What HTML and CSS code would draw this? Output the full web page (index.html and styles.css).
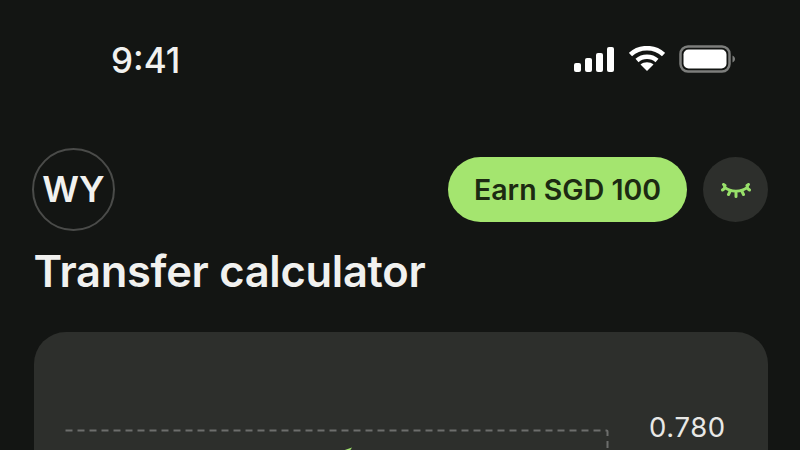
FILE: index.html
```html
<!DOCTYPE html>
<html lang="en">
<head>
<meta charset="utf-8">
<title>Transfer calculator</title>
<link rel="stylesheet" href="styles.css">
</head>
<body>
<main class="screen">
  <header class="status">
    <span class="time">9:41</span>
    <div class="status-icons">
      <svg class="signal" width="40" height="25" viewBox="0 0 40 25"><rect x="0" y="16" width="7" height="9" rx="2"/><rect x="11" y="11" width="7" height="14" rx="2"/><rect x="22" y="6" width="7" height="19" rx="2"/><rect x="33" y="0" width="7" height="25" rx="2"/></svg>
      <svg class="wifi" width="36" height="26" viewBox="0 0 36 26"><path d="M1.500 8.500C10.500 0 25.500 0 34.500 8.500" class="arc"/><path d="M8 14.500C13.500 9.500 22.500 9.500 28 14.500" class="arc"/><path d="M18 25L11.500 18.500C15 15.500 21 15.500 24.500 18.500Z" class="fill"/></svg>
      <svg class="battery" width="56" height="28" viewBox="0 0 56 28"><rect x="1.500" y="1.500" width="49" height="25" rx="7.500" class="shell"/><rect x="4.500" y="4.500" width="43" height="19" rx="5" class="level"/><path d="M53.500 10.500C55.200 11.200 56 12.500 56 14C56 15.500 55.200 16.800 53.500 17.500Z" class="cap"/></svg>
    </div>
  </header>

  <section class="top-row">
    <div class="avatar">WY</div>
    <div class="actions">
      <button class="earn">Earn SGD 100</button>
      <button class="eye" aria-label="Hide balance">
        <svg width="30" height="16" viewBox="0 0 30 16"><path d="M3.500 4C9.500 9.500 20.500 9.500 26.500 4"/><path d="M3.500 5.500L1.500 7M4 2.500L2.500 1.500M9 8.500L7.500 11.500M15 10V13.500M21 8.500L22.500 11.500M26.500 5.500L28.500 7M26 2.500L27.500 1.500"/></svg>
      </button>
    </div>
  </section>

  <h1 class="title">Transfer calculator</h1>

  <section class="card">
    <div class="chart">
      <svg class="plot" width="544" height="23" viewBox="0 0 544 23">
        <path d="M.500 1.500H541.500Q542.500 1.500 542.500 2.500V23" class="grid"/>
        <path d="M277 22L287 18.500L284 23Z" class="mark"/>
      </svg>
      <span class="rate">0.780</span>
    </div>
  </section>
</main>
</body>
</html>
```

FILE: styles.css
```css
* { box-sizing: border-box; }
html, body { margin: 0; height: 100%; }
body { background: #131513; overflow: hidden; font-family: Inter, "Liberation Sans", sans-serif; color: #f1f1ef; }
.screen { width: 800px; height: 450px; overflow: hidden; padding: 0 32px; }
.status { height: 119px; display: flex; justify-content: space-between; align-items: flex-start; padding: 40px 33px 0 79px; }
.time { font-size: 35px; line-height: 40px; font-weight: 500; }
.status-icons { display: flex; align-items: center; gap: 14px; padding-top: 5px; margin-left: -1px; }
.signal { margin-right: 1px; }
.signal rect { fill: #fff; }
.arc { fill: none; stroke: #fff; stroke-width: 4.500; }
.fill { fill: #fff; }
.shell { fill: none; stroke: #7d7e7c; stroke-width: 2.500; }
.level { fill: #fff; }
.cap { fill: #7d7e7c; }
.top-row { display: flex; justify-content: space-between; align-items: center; margin-top: 28px; height: 84px; }
.avatar { width: 83px; height: 83px; border-radius: 50%; border: 2px solid #4a4b49; display: flex; align-items: center; justify-content: center; font-size: 36px; font-weight: 600; }
.actions { display: flex; align-items: center; gap: 16px; }
.earn { width: 239px; height: 65px; border: 0; border-radius: 33px; background: #a4e56f; color: #1c2a12; font: 600 28.500px Inter, "Liberation Sans", sans-serif; letter-spacing: 0; padding: 0; }
.eye { width: 65px; height: 65px; border: 0; border-radius: 50%; background: #2d2f2c; display: flex; align-items: center; justify-content: center; padding: 4px 0 0; }
.eye path { fill: none; stroke: #98e06a; stroke-width: 3; stroke-linecap: round; }
.title { margin: 12px 0 0 1.500px; font-size: 43.500px; line-height: 56px; font-weight: 600; letter-spacing: -0.3px; }
.card { margin: 33px 0 0 1.500px; width: 734.500px; height: 200px; border-radius: 32px 32px 0 0; background: #2d2f2c; padding-top: 78px; }
.chart { display: flex; align-items: flex-start; padding-left: 31px; }
.plot { flex: none; margin-top: 19px; }
.grid { fill: none; stroke: #6d6e6c; stroke-width: 2; stroke-dasharray: 7 5; }
.mark { fill: #a4e56f; }
.rate { margin: 0 0 0 40.500px; font-size: 27.500px; line-height: 34px; letter-spacing: 0.6px; color: #e8e8e6; }
```
